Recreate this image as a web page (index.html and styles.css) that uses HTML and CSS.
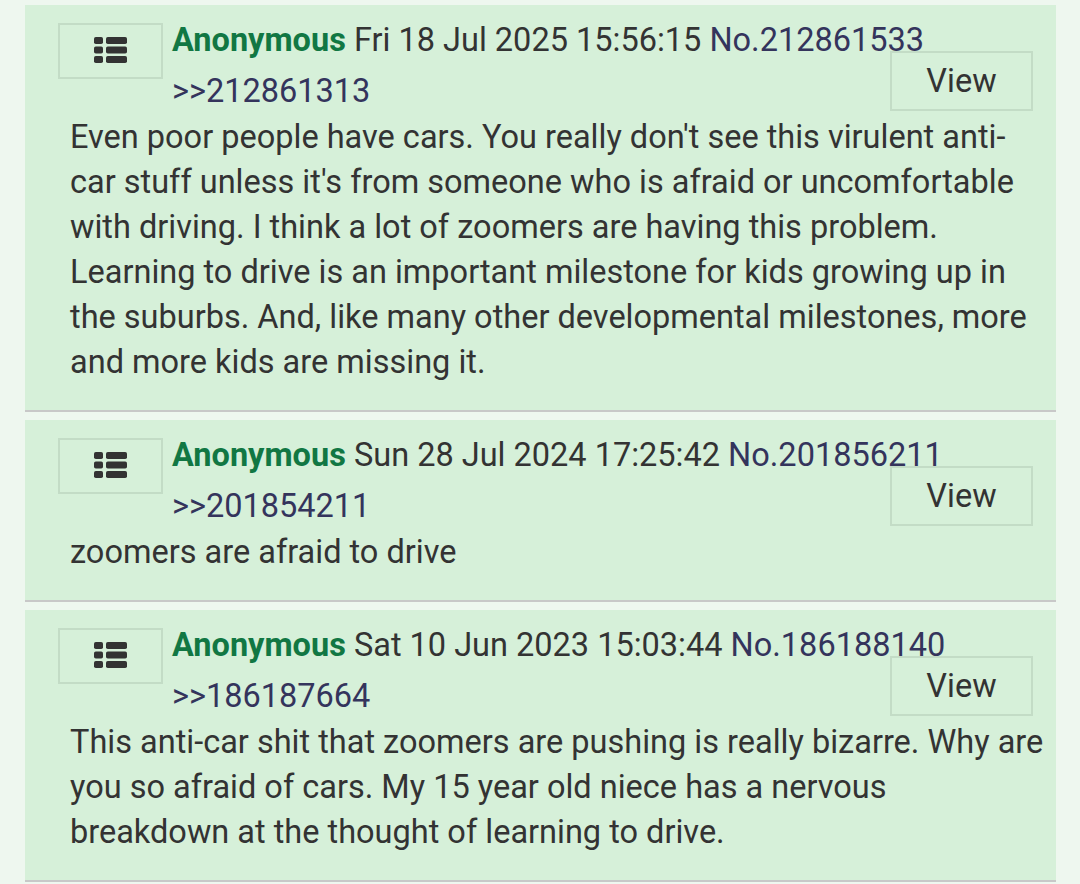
FILE: index.html
```html
<!DOCTYPE html>
<html>
<head>
<meta charset="utf-8">
<link rel="stylesheet" href="styles.css">
</head>
<body>
<div class="thread">
  <div class="post">
    <div class="head">
      <div class="menu-btn"><svg class="menu-icon" viewBox="0 0 33 26" width="33" height="26"><rect x="0" y="0" width="9" height="7" rx="1.8"/><rect x="12" y="0" width="21" height="7" rx="1.8"/><rect x="0" y="9.5" width="9" height="7" rx="1.8"/><rect x="12" y="9.5" width="21" height="7" rx="1.8"/><rect x="0" y="19" width="9" height="7" rx="1.8"/><rect x="12" y="19" width="21" height="7" rx="1.8"/></svg></div>
      <div class="head-text">
        <div><span class="name">Anonymous</span> <span class="date">Fri 18 Jul 2025 15:56:15</span> <span class="num">No.212861533</span></div>
        <div class="quote">&gt;&gt;212861313</div>
      </div>
    </div>
    <div class="btn-view">View</div>
    <div class="body">Even poor people have cars. You really don't see this virulent anti-car stuff unless it's from someone who is afraid or uncomfortable with driving. I think a lot of zoomers are having this problem. Learning to drive is an important milestone for kids growing up in the suburbs. And, like many other developmental milestones, more and more kids are missing it.</div>
  </div>
  <div class="post">
    <div class="head">
      <div class="menu-btn"><svg class="menu-icon" viewBox="0 0 33 26" width="33" height="26"><rect x="0" y="0" width="9" height="7" rx="1.8"/><rect x="12" y="0" width="21" height="7" rx="1.8"/><rect x="0" y="9.5" width="9" height="7" rx="1.8"/><rect x="12" y="9.5" width="21" height="7" rx="1.8"/><rect x="0" y="19" width="9" height="7" rx="1.8"/><rect x="12" y="19" width="21" height="7" rx="1.8"/></svg></div>
      <div class="head-text">
        <div><span class="name">Anonymous</span> <span class="date">Sun 28 Jul 2024 17:25:42</span> <span class="num">No.201856211</span></div>
        <div class="quote">&gt;&gt;201854211</div>
      </div>
    </div>
    <div class="btn-view">View</div>
    <div class="body">zoomers are afraid to drive</div>
  </div>
  <div class="post">
    <div class="head">
      <div class="menu-btn"><svg class="menu-icon" viewBox="0 0 33 26" width="33" height="26"><rect x="0" y="0" width="9" height="7" rx="1.8"/><rect x="12" y="0" width="21" height="7" rx="1.8"/><rect x="0" y="9.5" width="9" height="7" rx="1.8"/><rect x="12" y="9.5" width="21" height="7" rx="1.8"/><rect x="0" y="19" width="9" height="7" rx="1.8"/><rect x="12" y="19" width="21" height="7" rx="1.8"/></svg></div>
      <div class="head-text">
        <div><span class="name">Anonymous</span> <span class="date">Sat 10 Jun 2023 15:03:44</span> <span class="num">No.186188140</span></div>
        <div class="quote">&gt;&gt;186187664</div>
      </div>
    </div>
    <div class="btn-view">View</div>
    <div class="body">This anti-car shit that zoomers are pushing is really bizarre. Why are you so afraid of cars. My 15 year old niece has a nervous breakdown at the thought of learning to drive.</div>
  </div>
</div>
</body>
</html>
```
FILE: styles.css
```css
html, body {
  margin: 0;
  padding: 0;
  background: #eef7ef;
}
body {
  font-family: Roboto, "Noto Sans", sans-serif;
  font-size: 32.5px;
  color: #333333;
}
.thread {
  padding: 5px 24px 0 25px;
  display: flex;
  flex-direction: column;
  gap: 8px;
}
.post {
  position: relative;
  background: #d6f0d9;
  border-bottom: 2px solid #c8c8c8;
  padding: 10px 12px 25px 45px;
}
.head {
  display: flex;
  align-items: flex-start;
}
.menu-btn {
  box-sizing: border-box;
  width: 105px;
  height: 56px;
  margin: 8px 9px 0 -12px;
  border: 2px solid #c3dcc6;
  display: flex;
  align-items: center;
  justify-content: center;
  padding-bottom: 3px;
}
.menu-icon {
  fill: #333333;
  display: block;
}
.head-text {
  line-height: 51px;
}
.name {
  color: #117743;
  font-weight: bold;
}
.date {
  color: #333333;
}
.num, .quote {
  color: #34345c;
}
.btn-view {
  position: absolute;
  top: 46px;
  right: 23px;
  box-sizing: border-box;
  width: 143px;
  height: 60px;
  border: 2px solid #c3dcc6;
  display: flex;
  align-items: center;
  justify-content: center;
  color: #333333;
}
.body {
  margin-top: -2px;
  line-height: 45px;
}
```
